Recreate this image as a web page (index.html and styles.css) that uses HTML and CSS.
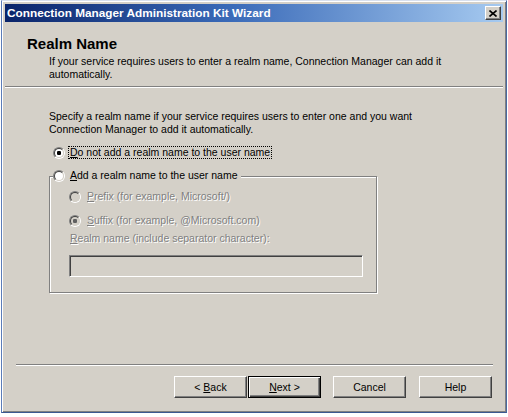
FILE: index.html
```html
<!DOCTYPE html>
<html>
<head>
<meta charset="utf-8">
<link rel="stylesheet" href="styles.css">
</head>
<body>
<div class="window">
  <div class="titlebar">
    <span class="title">Connection Manager Administration Kit Wizard</span>
    <span class="close"><svg width="8" height="7" viewBox="0 0 8 7"><path d="M0.5 0.5 L7.5 6.5 M7.5 0.5 L0.5 6.5" stroke="#000" stroke-width="1.6" fill="none"/></svg></span>
  </div>
  <div class="client">
    <div class="header">
      <div class="h-title">Realm Name</div>
      <div class="h-sub">If your service requires users to enter a realm name, Connection Manager can add it<br>automatically.</div>
    </div>
    <div class="sep-top"></div>
    <div class="body">
      <p class="intro">Specify a realm name if your service requires users to enter one and you want<br>Connection Manager to add it automatically.</p>
      <div class="row first">
        <span class="radio checked"></span>
        <span class="focus"><u>D</u>o not add a realm name to the user name</span>
      </div>
      <div class="group">
        <div class="legend row">
          <span class="radio"></span>
          <span class="lbl"><u>A</u>dd a realm name to the user name</span>
        </div>
        <div class="row inner prefix disabled">
          <span class="radio dis"></span>
          <span class="lbl"><u>P</u>refix (for example, Microsoft/)</span>
        </div>
        <div class="row inner suffix disabled">
          <span class="radio dis checked"></span>
          <span class="lbl"><u>S</u>uffix (for example, @Microsoft.com)</span>
        </div>
        <div class="field-label disabled"><u>R</u>ealm name (include separator character):</div>
        <div class="textbox"></div>
      </div>
    </div>
    <div class="spacer"></div>
    <div class="sep-bottom"></div>
    <div class="buttons">
      <span class="btn back"><span>&lt; <u>B</u>ack</span></span>
      <span class="btn next default"><span><u>N</u>ext &gt;</span></span>
      <span class="btn cancel"><span>Cancel</span></span>
      <span class="btn help"><span>Help</span></span>
    </div>
  </div>
</div>
</body>
</html>
```

FILE: styles.css
```css
html, body {
  margin: 0;
  padding: 0;
  background: #ffffff;
}
body {
  font-family: "Liberation Sans", Arial, sans-serif;
  font-size: 10.5px;
  color: #000;
}
.window {
  box-sizing: border-box;
  margin-left: 1px;
  width: 506px;
  height: 413px;
  border: 1px solid;
  border-color: #d8e0ee #4a68a0 #3a5890 #5b7cb8;
  padding: 3px;
  background: #d4d0c8;
  box-shadow: inset 1px 1px 0 #ffffff, inset -1px -1px 0 #808080;
  display: flex;
  flex-direction: column;
}
.titlebar {
  height: 18px;
  margin-bottom: 1px;
  background: linear-gradient(to right, #0a246a 0%, #3a6ab8 45%, #a6caf0 100%);
  display: flex;
  align-items: center;
  justify-content: space-between;
  padding-left: 2px;
  padding-right: 2px;
}
.title {
  color: #fff;
  font-weight: bold;
  font-size: 11.8px;
  line-height: 18px;
  white-space: nowrap;
}
.close {
  box-sizing: border-box;
  width: 16px;
  height: 14px;
  background: #d4d0c8;
  border: 1px solid;
  border-color: #ffffff #404040 #404040 #ffffff;
  box-shadow: inset -1px -1px 0 #808080;
  display: flex;
  align-items: center;
  justify-content: center;
}
.close svg { display: block; margin-left: -1px; }
.client {
  flex: 1;
  display: flex;
  flex-direction: column;
}
.header {
  padding: 14px 0 0 22px;
}
.h-title {
  font-size: 15px;
  font-weight: bold;
  line-height: 14px;
}
.h-sub {
  margin-top: 4px;
  padding-left: 22px;
  line-height: 13px;
}
.sep-top {
  margin-top: 5px;
  border-top: 1px solid #808080;
  border-bottom: 1px solid #ffffff;
}
.body {
  padding-left: 44px;
}
.intro {
  margin: 22px 0 0 0;
  line-height: 13px;
}
.row {
  display: flex;
  align-items: center;
  height: 13px;
  line-height: 11px;
}
.row.first {
  margin-top: 10px;
  padding-left: 4px;
}
.radio {
  box-sizing: border-box;
  flex: none;
  width: 12px;
  height: 12px;
  border-radius: 50%;
  border: 1px solid;
  border-color: #808080 #ffffff #ffffff #808080;
  display: flex;
  align-items: center;
  justify-content: center;
}
.radio::before {
  content: "";
  box-sizing: border-box;
  width: 10px;
  height: 10px;
  border-radius: 50%;
  border: 1px solid;
  border-color: #404040 #d4d0c8 #d4d0c8 #404040;
  background: #ffffff;
}
.radio.checked::before {
  background: radial-gradient(circle at 50% 50%, #000 0, #000 2px, #fff 2.4px);
}
.radio.dis::before {
  background: #d4d0c8;
}
.radio.dis.checked::before {
  background: radial-gradient(circle at 50% 50%, #606060 0, #606060 2px, #d4d0c8 2.4px);
}
.focus {
  margin-left: 3px;
  padding: 0 1px;
  border: 1px dotted #000;
  line-height: 11px;
  white-space: nowrap;
}
.lbl {
  margin-left: 5px;
  white-space: nowrap;
}
.group {
  box-sizing: border-box;
  width: 328px;
  margin-top: 17px;
  border: 1px solid #808080;
  box-shadow: inset 1px 1px 0 #ffffff, 1px 1px 0 #ffffff;
  padding-bottom: 15px;
}
.legend {
  width: max-content;
  margin-top: -8px;
  margin-left: 3px;
  padding-right: 3px;
  background: #d4d0c8;
}
.inner {
  padding-left: 19px;
}
.inner .lbl {
  margin-left: 6px;
}
.prefix { margin-top: 8px; }
.suffix { margin-top: 11px; }
.disabled {
  color: #808080;
  text-shadow: 1px 1px 0 #ffffff;
}
.field-label {
  margin-top: 5px;
  padding-left: 20px;
  line-height: 13px;
  white-space: nowrap;
}
.textbox {
  box-sizing: border-box;
  margin-top: 10px;
  margin-left: 19px;
  width: 294px;
  height: 22px;
  border: 1px solid;
  border-color: #808080 #ffffff #ffffff #808080;
  box-shadow: inset 1px 1px 0 #404040, inset -1px -1px 0 #d4d0c8;
  background: #d4d0c8;
}
.spacer { flex: 1; }
.sep-bottom {
  margin: 0 10px 10px 11px;
  border-top: 1px solid #808080;
  border-bottom: 1px solid #ffffff;
}
.buttons {
  display: flex;
  justify-content: flex-end;
  padding: 0 11px 11px 0;
}
.btn {
  box-sizing: border-box;
  width: 73px;
  height: 22px;
  display: flex;
  align-items: center;
  justify-content: center;
  border: 1px solid;
  border-color: #ffffff #404040 #404040 #ffffff;
  box-shadow: inset -1px -1px 0 #808080;
  background: #d4d0c8;
  white-space: nowrap;
}
.btn.default {
  border-color: #000;
  box-shadow: inset 1px 1px 0 #ffffff, inset -1px -1px 0 #404040, inset -2px -2px 0 #808080;
}
.next { margin-left: 1px; }
.cancel { margin-left: 12px; }
.help { margin-left: 13px; }
```
